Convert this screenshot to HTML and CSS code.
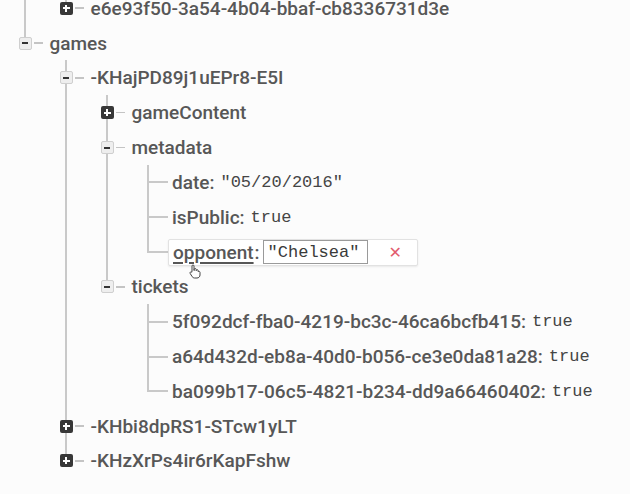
FILE: index.html
```html
<!DOCTYPE html>
<html>
<head>
<meta charset="utf-8">
<link rel="stylesheet" href="styles.css">
</head>
<body>
<ul class="tree root">
  <li class="node">
    <ul class="kids">
      <li class="node last">
        <div class="row"><span class="box plus"></span><span class="dash"></span><span class="key">e6e93f50-3a54-4b04-bbaf-cb8336731d3e</span></div>
      </li>
    </ul>
  </li>
  <li class="node last">
    <div class="row"><span class="box minus"></span><span class="dash"></span><span class="key">games</span></div>
    <ul class="kids">
      <li class="node">
        <div class="row"><span class="box minus"></span><span class="dash"></span><span class="key">-KHajPD89j1uEPr8-E5I</span></div>
        <ul class="kids">
          <li class="node">
            <div class="row"><span class="box plus"></span><span class="dash"></span><span class="key">gameContent</span></div>
          </li>
          <li class="node">
            <div class="row"><span class="box minus"></span><span class="dash"></span><span class="key">metadata</span></div>
            <ul class="kids">
              <li class="node leaf">
                <div class="row"><span class="hline"></span><span class="key">date:</span><span class="val">"05/20/2016"</span></div>
              </li>
              <li class="node leaf">
                <div class="row"><span class="hline"></span><span class="key">isPublic:</span><span class="val">true</span></div>
              </li>
              <li class="node leaf last">
                <div class="row"><span class="hline edit-line"></span>
                  <div class="edit">
                    <span class="key ekey">opponent</span><span class="key colon">:</span>
                    <span class="input">"Chelsea"</span>
                    <span class="close">&#x2715;</span>
                    <svg class="cursor" width="13" height="15" viewBox="0 0 13 15"><path d="M4 7V2a1 1 0 0 1 2 0v4.5h.2V5.5a1 1 0 0 1 2 0v1.2a1 1 0 0 1 2 0v1.1a1 1 0 0 1 1.8.5V11c0 1.7-1.3 3-3 3H6.5c-1 0-1.8-.5-2.3-1.3L2.2 9.5a1 1 0 0 1 1.6-1.2Z" fill="#fff" stroke="#444" stroke-width="1"/></svg>
                  </div>
                </div>
              </li>
            </ul>
          </li>
          <li class="node last">
            <div class="row"><span class="box minus"></span><span class="dash"></span><span class="key">tickets</span></div>
            <ul class="kids">
              <li class="node leaf">
                <div class="row"><span class="hline"></span><span class="key">5f092dcf-fba0-4219-bc3c-46ca6bcfb415:</span><span class="val">true</span></div>
              </li>
              <li class="node leaf">
                <div class="row"><span class="hline"></span><span class="key">a64d432d-eb8a-40d0-b056-ce3e0da81a28:</span><span class="val">true</span></div>
              </li>
              <li class="node leaf last">
                <div class="row"><span class="hline"></span><span class="key">ba099b17-06c5-4821-b234-dd9a66460402:</span><span class="val">true</span></div>
              </li>
            </ul>
          </li>
        </ul>
      </li>
      <li class="node">
        <div class="row"><span class="box plus"></span><span class="dash"></span><span class="key">-KHbi8dpRS1-STcw1yLT</span></div>
      </li>
      <li class="node last">
        <div class="row"><span class="box plus"></span><span class="dash"></span><span class="key">-KHzXrPs4ir6rKapFshw</span></div>
      </li>
    </ul>
  </li>
</ul>
</body>
</html>
```
FILE: styles.css
```css
html, body {
  margin: 0;
  padding: 0;
  background: #fcfcfc;
}
body {
  font-family: Roboto, "Liberation Sans", sans-serif;
  overflow: hidden;
}
.tree, .kids {
  list-style: none;
  margin: 0;
  padding: 0;
}
.root {
  padding-left: 25px;
  margin-top: -9.2px;
}
.kids {
  padding-left: 41px;
}
.node {
  position: relative;
}
.node::before {
  content: "";
  position: absolute;
  left: -1px;
  top: 0;
  bottom: 0;
  width: 2px;
  background: #c9c9c9;
}
.node.last::before {
  bottom: auto;
  height: 17.4px;
}
.row {
  height: 34.83px;
  display: flex;
  align-items: center;
  margin-left: -6.5px;
}
.leaf > .row {
  margin-left: -1px;
}
.box {
  position: relative;
  z-index: 1;
  width: 13px;
  height: 13px;
  box-sizing: border-box;
  border-radius: 2px;
  flex: none;
  display: flex;
  align-items: center;
  justify-content: center;
}
.box.plus {
  background: #383838;
}
.box.plus::before, .box.plus::after {
  content: "";
  position: absolute;
  background: #fff;
}
.box.plus::before {
  width: 7px;
  height: 2px;
}
.box.plus::after {
  width: 2px;
  height: 7px;
}
.box.minus {
  background: #eeeeee;
  border: 1px solid #cfcfcf;
}
.box.minus::before {
  content: "";
  width: 6px;
  height: 2px;
  background: #333;
}
.dash {
  width: 9px;
  height: 1.5px;
  margin-left: 2px;
  margin-right: 7px;
  background: #c4c4c4;
  flex: none;
}
.hline {
  width: 21px;
  height: 2px;
  background: #c9c9c9;
  margin-right: 4px;
  flex: none;
}
.hline.edit-line {
  margin-right: 0;
}
.key {
  font-size: 19px;
  font-weight: 500;
  color: #575757;
  white-space: nowrap;
}
.val {
  font-family: "Liberation Mono", "DejaVu Sans Mono", monospace;
  font-size: 17px;
  color: #454545;
  margin-left: 6px;
  white-space: nowrap;
}
.edit {
  position: relative;
  display: flex;
  align-items: center;
  width: 250px;
  height: 27px;
  box-sizing: border-box;
  padding-left: 4px;
  background: #fff;
  border: 1px solid #e2e2e2;
  border-radius: 2px;
  box-shadow: 0 1px 2px rgba(0, 0, 0, 0.08);
}
.ekey {
  text-decoration: underline;
  text-decoration-thickness: 2px;
  text-underline-offset: 3px;
}
.colon {
  margin-left: 1px;
}
.input {
  margin-left: 3px;
  width: 105px;
  height: 24px;
  box-sizing: border-box;
  border: 1px solid #9a9a9a;
  padding-left: 4px;
  display: flex;
  align-items: center;
  font-family: "Liberation Mono", "DejaVu Sans Mono", monospace;
  font-size: 17px;
  color: #3a3a3a;
  background: #fff;
}
.close {
  margin-left: auto;
  margin-right: 15px;
  color: #e25c6e;
  font-family: "DejaVu Sans", sans-serif;
  font-size: 16px;
}
.cursor {
  position: absolute;
  left: 19px;
  top: 24px;
}
```
